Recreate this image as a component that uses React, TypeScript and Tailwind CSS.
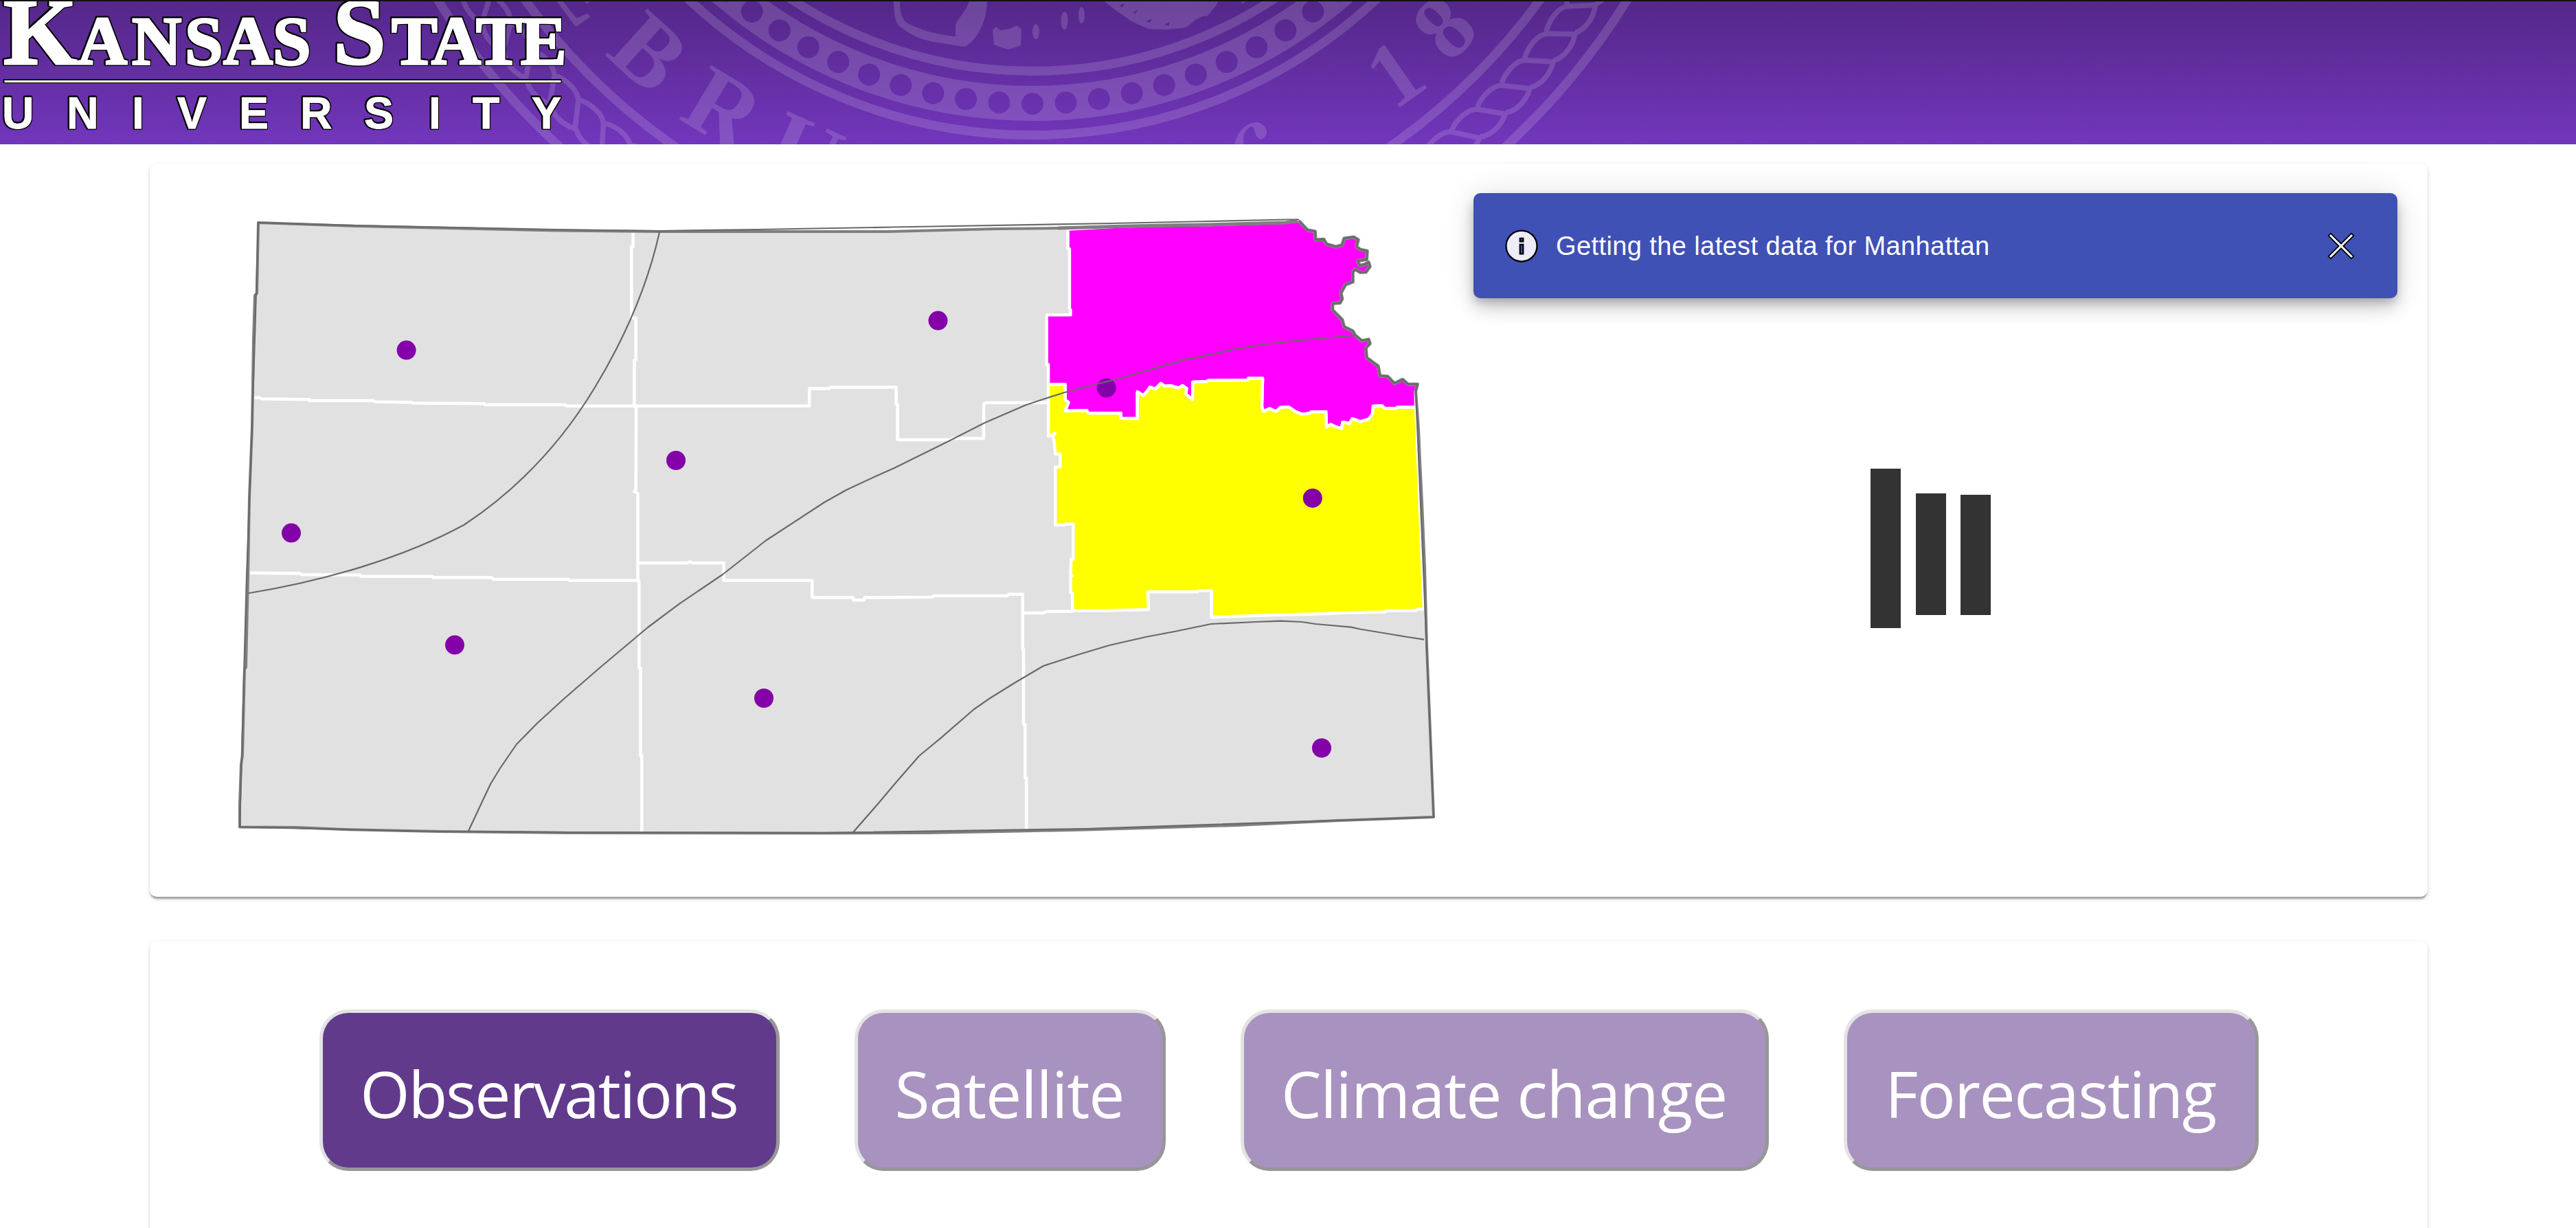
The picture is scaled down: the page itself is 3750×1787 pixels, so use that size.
import React from "react";

const RIVER =
  "1418 660 1425 635 1390 635 1370 618 1340 632 1315 607 1287 605 1280 570 1238 540 1235 505 1250 490 1245 475 1220 480 1195 460 1187 445 1155 430 1148 405 1112 370 1113 347 1140 345 1148 330 1143 310 1160 280 1187 270 1187 235 1195 225 1215 236 1235 235 1250 215 1245 200 1230 208 1212 212 1205 195 1238 190 1240 160 1215 155 1200 145 1207 120 1190 110 1155 115 1148 138 1125 145 1090 135 1080 118 1050 120 1048 90 1020 85 988 52";

const DIVIDE =
  "66 636 128 636 128 690 140 700 128 730 208 728 213 738 333 738 333 757 394 757 394 662 415 675 430 660 440 645 460 652 480 632 495 642 515 640 545 648 560 640 575 650 572 670 597 690 598 627 650 625 655 621 800 620 802 614 855 614 852 715 858 732 880 722 905 732 920 718 950 716 975 732 1000 742 1030 738 1035 733 1088 733 1090 788 1105 778 1120 785 1145 793 1150 770 1175 775 1185 758 1215 768 1245 760 1260 740 1262 713 1295 712 1305 721 1345 721 1352 717 1419 717";

const NORTHEAST = `M138 82L138 152 144 152 144 365 148 370 148 388 60 388 60 565 66 565 ${DIVIDE} ${RIVER} 940 58 660 66 500 68 320 72Z`;

const EAST = `M${DIVIDE} 1449 1437 1425 1437 1420 1441 1310 1442 1305 1447 1180 1449 1045 1454 915 1457 730 1463 667 1466 667 1370 620 1370 615 1375 432 1375 435 1438 280 1442 155 1442 155 1380 148 1378 148 1320 153 1318 148 1310 150 1258 158 1258 158 1133 130 1133 125 1137 92 1137 92 930 110 930 110 884 92 884 88 840 82 820 90 810 66 820Z`;

const STATE =
  "M1889 321L1872 324 1761 327 1698 328 1626 329.5 1540 332 1450 333 1293 337 960 337 811 335.5 518 329 376 324 374 427 371 430 369 494 367 621 363 724 361 839 358 971 356 974 353 1100 351 1112 349 1170 349 1203.5 430 1204 501 1207 639 1210 828 1212 1200 1212.5 1350 1212 1483 1209.5 1580 1207.5 1800 1201 1950 1194 2087 1189 2077 940 2074 826 2070 731 2067 671 2065 624 2061 569";

const CELLS = Array.from({ length: 54 }, (_, i) => i - 16);
const BEADS = Array.from({ length: 33 }, (_, i) => i - 16);

const STATIONS = [
  [591.6, 509.6],
  [424, 775.6],
  [662, 938.6],
  [984, 670],
  [1112, 1016],
  [1365.5, 466.6],
  [1610.7, 564.5],
  [1910.8, 724.9],
  [1924, 1088.5],
];

function Seal() {
  return (
    <g opacity="0.14" fill="none" stroke="#fff">
      <g strokeWidth="13">
        <circle cx="1503" cy="-537" r="640.5" />
        <circle cx="1503" cy="-537" r="687.5" strokeWidth="51" mask="url(#beads)" />
        <circle cx="1503" cy="-537" r="733.5" />
        <circle cx="1503" cy="-537" r="913" />
        <circle cx="1503" cy="-537" r="1018.5" />
      </g>
      <g strokeWidth="7.5">
        {CELLS.map((k) => (
          <path
            key={k}
            d="M2186 121C2191 106 2206 88 2220 87.500L2261 90C2257 108 2243 124 2228 127"
            transform={`rotate(${k * 3} 1503 -537)`}
          />
        ))}
      </g>
      <g fill="#fff" stroke="none" fontFamily="'Liberation Serif', serif" fontSize="140" fontWeight="bold">
        <text transform="translate(787 -29) rotate(53)">E</text>
        <text transform="translate(879 79) rotate(42)">B</text>
        <text transform="translate(986 172) rotate(31)">R</text>
        <text transform="translate(1106 244) rotate(24)">U</text>
        <text transform="translate(2056 143) rotate(-35)" textAnchor="middle" fontSize="132">
          1
        </text>
        <text transform="translate(2134 70) rotate(-46)" textAnchor="middle" fontSize="132">
          8
        </text>
        <path d="M1797 212C1800 192 1815 177 1830 178C1845 181 1849 197 1836 203C1826 201 1828 188 1823 184C1812 186 1808 198 1811 212Z" />
        <path d="M1301 0C1302 22 1302 33 1312 40C1330 55 1350 60 1372 63C1390 65 1398 69 1407 67C1424 55 1437 30 1437 0L1411 0C1407 18 1392 28 1391 38L1391 53C1360 50 1335 42 1318 32C1310 22 1310 12 1310 0Z" />
        <path d="M1445 44L1450 39 1456 44 1470 42 1480 37 1487 42 1486 66 1478 69 1467 72 1447 65Z" />
        <ellipse cx="1508" cy="46" rx="5" ry="11" />
        <ellipse cx="1549.500" cy="30" rx="5" ry="13" />
        <ellipse cx="1574.500" cy="22" rx="4.500" ry="12" />
        <path
          fillRule="evenodd"
          d="M1605 0L1627 17 1646 30 1658 36 1672 42 1698 43 1726 40 1742 28 1750 24 1758 23 1771 7 1774 0ZM1630 8l7-3-3 6zM1649 18l8-4-4 6zM1668 31l9-4-3 6zM1695 36l8-4-2 6z"
        />
        <path d="M1806 0h10l-8 6z" />
      </g>
    </g>
  );
}

function Header() {
  return (
    <header className="h-[210px] w-full overflow-hidden">
      <svg viewBox="0 0 3750 210" className="block h-[210px] w-[3750px]">
        <defs>
          <linearGradient id="bar" x1="0" y1="0" x2="0" y2="1">
            <stop offset="0" stopColor="#542788" />
            <stop offset="1" stopColor="#7236bc" />
          </linearGradient>
          <mask id="beads" maskUnits="userSpaceOnUse" x="600" y="-10" width="1900" height="240">
            <rect x="600" y="-10" width="1900" height="240" fill="#fff" />
            {BEADS.map((k) => (
              <circle key={k} cx="1503" cy="151" r="16" fill="#000" transform={`rotate(${k * 4.045} 1503 -537)`} />
            ))}
          </mask>
        </defs>
        <rect width="3750" height="210" fill="url(#bar)" />
        <Seal />
        <g
          fill="#fff"
          stroke="#fff"
          className="[filter:drop-shadow(1.5px_0_0_#000)_drop-shadow(-1.5px_0_0_#000)_drop-shadow(0_1.5px_0_#000)_drop-shadow(0_-1.5px_0_#000)]"
        >
          <g fontFamily="'Liberation Serif', serif" fontWeight="bold" strokeWidth="3">
            <text y="93" fontSize="138">
              <tspan x="5">K</tspan>
              <tspan x="485">S</tspan>
            </text>
            <text y="93" fontSize="100" x="113 192 269 325 397 570 628 693 758">
              ANSASTATE
            </text>
          </g>
          <rect x="6.500" y="117" width="810" height="3" stroke="none" />
          <text
            y="187"
            fontSize="64.5"
            fontFamily="'Liberation Sans', sans-serif"
            fontWeight="bold"
            stroke="#fff"
            strokeWidth="0.8"
            x="3 97 192 258 348 437 530 624 688 774"
          >
            UNIVERSITY
          </text>
        </g>
        <rect width="3750" height="2" fill="#111" />
      </svg>
    </header>
  );
}

function KansasMap() {
  return (
    <svg
      viewBox="300 300 1840 950"
      className="block h-[950px] w-[1840px] shrink-0 [&_path]:[vector-effect:non-scaling-stroke]"
    >
      <path d={`${STATE} 1900 580 1860 400Z`} fill="#e1e1e1" />
      <g fill="none" stroke="#fff" strokeWidth="4.500" strokeLinejoin="round">
        <g transform="matrix(.574 0 0 .6059 300 300)">
          <path d="M1083 62V97H1079V268H1090V370H1086V480L1091 485 1090 680 1086 685 1095 690V899H1098V1110H1102V1320H1105V1502" />
          <path d="M120 460L135 460 142 463 262 464 262 467 425 467 428 470 522 471 525 473 705 474 707 477 910 477 915 480 1530 480 1530 438 1568 438" />
          <path d="M112 881L238 882 242 885 390 886 393 889 573 889 576 892 725 892 728 896 920 896 922 899 1098 899" />
          <path d="M1098 857L1220 857 1227 854 1233 857 1313 857 1313 899 1537 899 1537 940 1568 940" />
        </g>
        <g transform="matrix(.33333 0 0 .6059 1100 300)">
          <path d="M234 438L322 438 328 435 614 435 614 475 620 477 620 561 852 561 860 558 996 558 996 475 1005 472 1275 472" />
          <path d="M247 940L425 940 427 946 474 946 476 940 770 939 778 936 1100 936 1106 932 1166 932 1166 1063 1170 1063 1170 1245 1177 1245 1177 1373 1183 1373 1183 1498" />
          <path d="M1166 977L1258 977 1265 974 1390 973" />
        </g>
        <g transform="matrix(.3954 0 0 .40816 1500 300)">
          <path d={NORTHEAST} fill="#ff00ff" />
          <path d={EAST} fill="#ffff00" />
        </g>
      </g>
      <g fill="none" stroke="#7f7f7f" strokeLinejoin="round">
        <path d={STATE} strokeWidth="4" />
        <path d="M1889 321L1872 324 1761 327 1698 328 1626 329.500 1540 332" strokeWidth="5" />
        <path d={`M${RIVER}`} strokeWidth="5" transform="matrix(.3954 0 0 .40816 1500 300)" />
      </g>
      <g fill="#8400a8">
        {STATIONS.map(([x, y]) => (
          <circle key={x} cx={x} cy={y} r="14" />
        ))}
      </g>
      <g fill="none" stroke="#696969" strokeWidth="2.200" strokeLinejoin="round">
        <path d="M1891 319.500L1874 319.500 1737 322.500 1618 325 1300 330.500 1100 334 960 336 811 334 518 328 376 324 367 621 359 839 349 1203.500 639 1210 828 1211 1200 1212 1580 1206 2087 1189 2073 850 2061 569" />
        <path d={`M${RIVER}`} transform="matrix(.3954 0 0 .40816 1500 300)" />
        <path
          d="M105 930C300 900 500 845 655 765C790 680 900 570 985 437C1060 320 1120 190 1150 62"
          transform="matrix(.574 0 0 .6059 300 300)"
        />
        <path d="M682 1209L714 1141 728 1118 752 1083 782 1052.500 822 1016 874 971 943 913 989 878.600 1052 836 1115 786.500 1200 731 1232 713 1275 693 1302 681 1383 641 1433 615.500 1493 589.500 1520 580.500 1550 571 1600 558 1625 552 1674 538 1731 521.600 1741 520.400 1793 509 1840 501 1895 495 1974 488" />
        <path d="M1242 1211L1277 1171 1304 1139 1338 1100 1370 1073.700 1418 1032 1440 1016.800 1477 993.700 1519 969 1570 952.500 1615 939 1670 926.500 1710 919 1763 908 1828 905 1864 903.600 1895 905 1915 908 1967 912.600 1980 915.500 2046 926.500 2073 930.600" />
      </g>
    </svg>
  );
}

function Snackbar() {
  return (
    <div className="flex h-[153px] w-[1345px] items-center rounded-[10px] bg-[#3f51b5] pl-[43px] pr-[57px] text-white shadow-[0_7.5px_12.5px_-2.5px_rgba(0,0,0,0.2),0_15px_25px_0_rgba(0,0,0,0.14),0_2.5px_45px_0_rgba(0,0,0,0.12)]">
      <svg viewBox="0 0 24 24" className="size-[54px]" fill="#ecedf8" stroke="#000" strokeWidth="1" fillRule="evenodd">
        <path d="M12 2C6.480 2 2 6.480 2 12s4.480 10 10 10 10-4.480 10-10S17.520 2 12 2zm1 15h-2v-6h2v6zm0-8h-2V7h2v2z" />
      </svg>
      <span className="ml-[23px] grow whitespace-nowrap font-['Liberation_Sans',sans-serif] text-[38px] leading-[54px] tracking-[0.4px]">
        Getting the latest data for Manhattan
      </span>
      <svg viewBox="0 0 50 50" className="size-[50px]" fill="none" strokeLinecap="square">
        <path d="M10 10L40 40M40 10L10 40" stroke="#000" strokeWidth="6.500" />
        <path d="M10 10L40 40M40 10L10 40" stroke="#fff" strokeWidth="3" />
      </svg>
    </div>
  );
}

function Loader() {
  return (
    <div className="mt-[248px] flex h-[234px] gap-[21.5px] pl-[578px]">
      <div className="h-[232px] w-[44px] bg-[#333]" />
      <div className="mt-[36px] h-[177px] w-[44px] bg-[#333]" />
      <div className="mt-[37.5px] h-[175.5px] w-[44px] bg-[#333]" />
    </div>
  );
}

const TABS = [
  { label: "Observations", style: "w-[670px] bg-[#613a8c] tracking-[-2.2px]" },
  { label: "Satellite", style: "w-[453px] bg-[#a892c0] tracking-[-1.1px]" },
  { label: "Climate change", style: "w-[769px] bg-[#a892c0] tracking-[-1.2px]" },
  { label: "Forecasting", style: "w-[604px] bg-[#a892c0] tracking-[-1.6px]" },
];

const CARD =
  "ml-[218px] w-[3316px] rounded-[10px] bg-white shadow-[0_5px_2.5px_-2.5px_rgba(0,0,0,0.2),0_2.5px_2.5px_0_rgba(0,0,0,0.14),0_2.5px_7.5px_0_rgba(0,0,0,0.12)]";

export default function App() {
  return (
    <div className="h-[1787px] w-[3750px] overflow-hidden bg-white">
      <Header />
      <section className={`${CARD} mt-[28px] flex h-[1067px] pl-[82px]`}>
        <div className="pt-[62px]">
          <KansasMap />
        </div>
        <div className="ml-[5px] pt-[43px]">
          <Snackbar />
          <Loader />
        </div>
      </section>
      <section className={`${CARD} mt-[65px] flex h-[600px] gap-[109px] pl-[247px] pt-[99px]`}>
        {TABS.map((t) => (
          <button
            key={t.label}
            className={`${t.style} flex h-[235px] items-center justify-center rounded-[42px] border-[5px] border-t-[#e3e3e3] border-l-[#e3e3e3] border-b-[#979797] border-r-[#979797] pt-[9px] pr-[2px] font-['Open_Sans',sans-serif] text-[93px] leading-none whitespace-nowrap text-white`}
          >
            {t.label}
          </button>
        ))}
      </section>
    </div>
  );
}
